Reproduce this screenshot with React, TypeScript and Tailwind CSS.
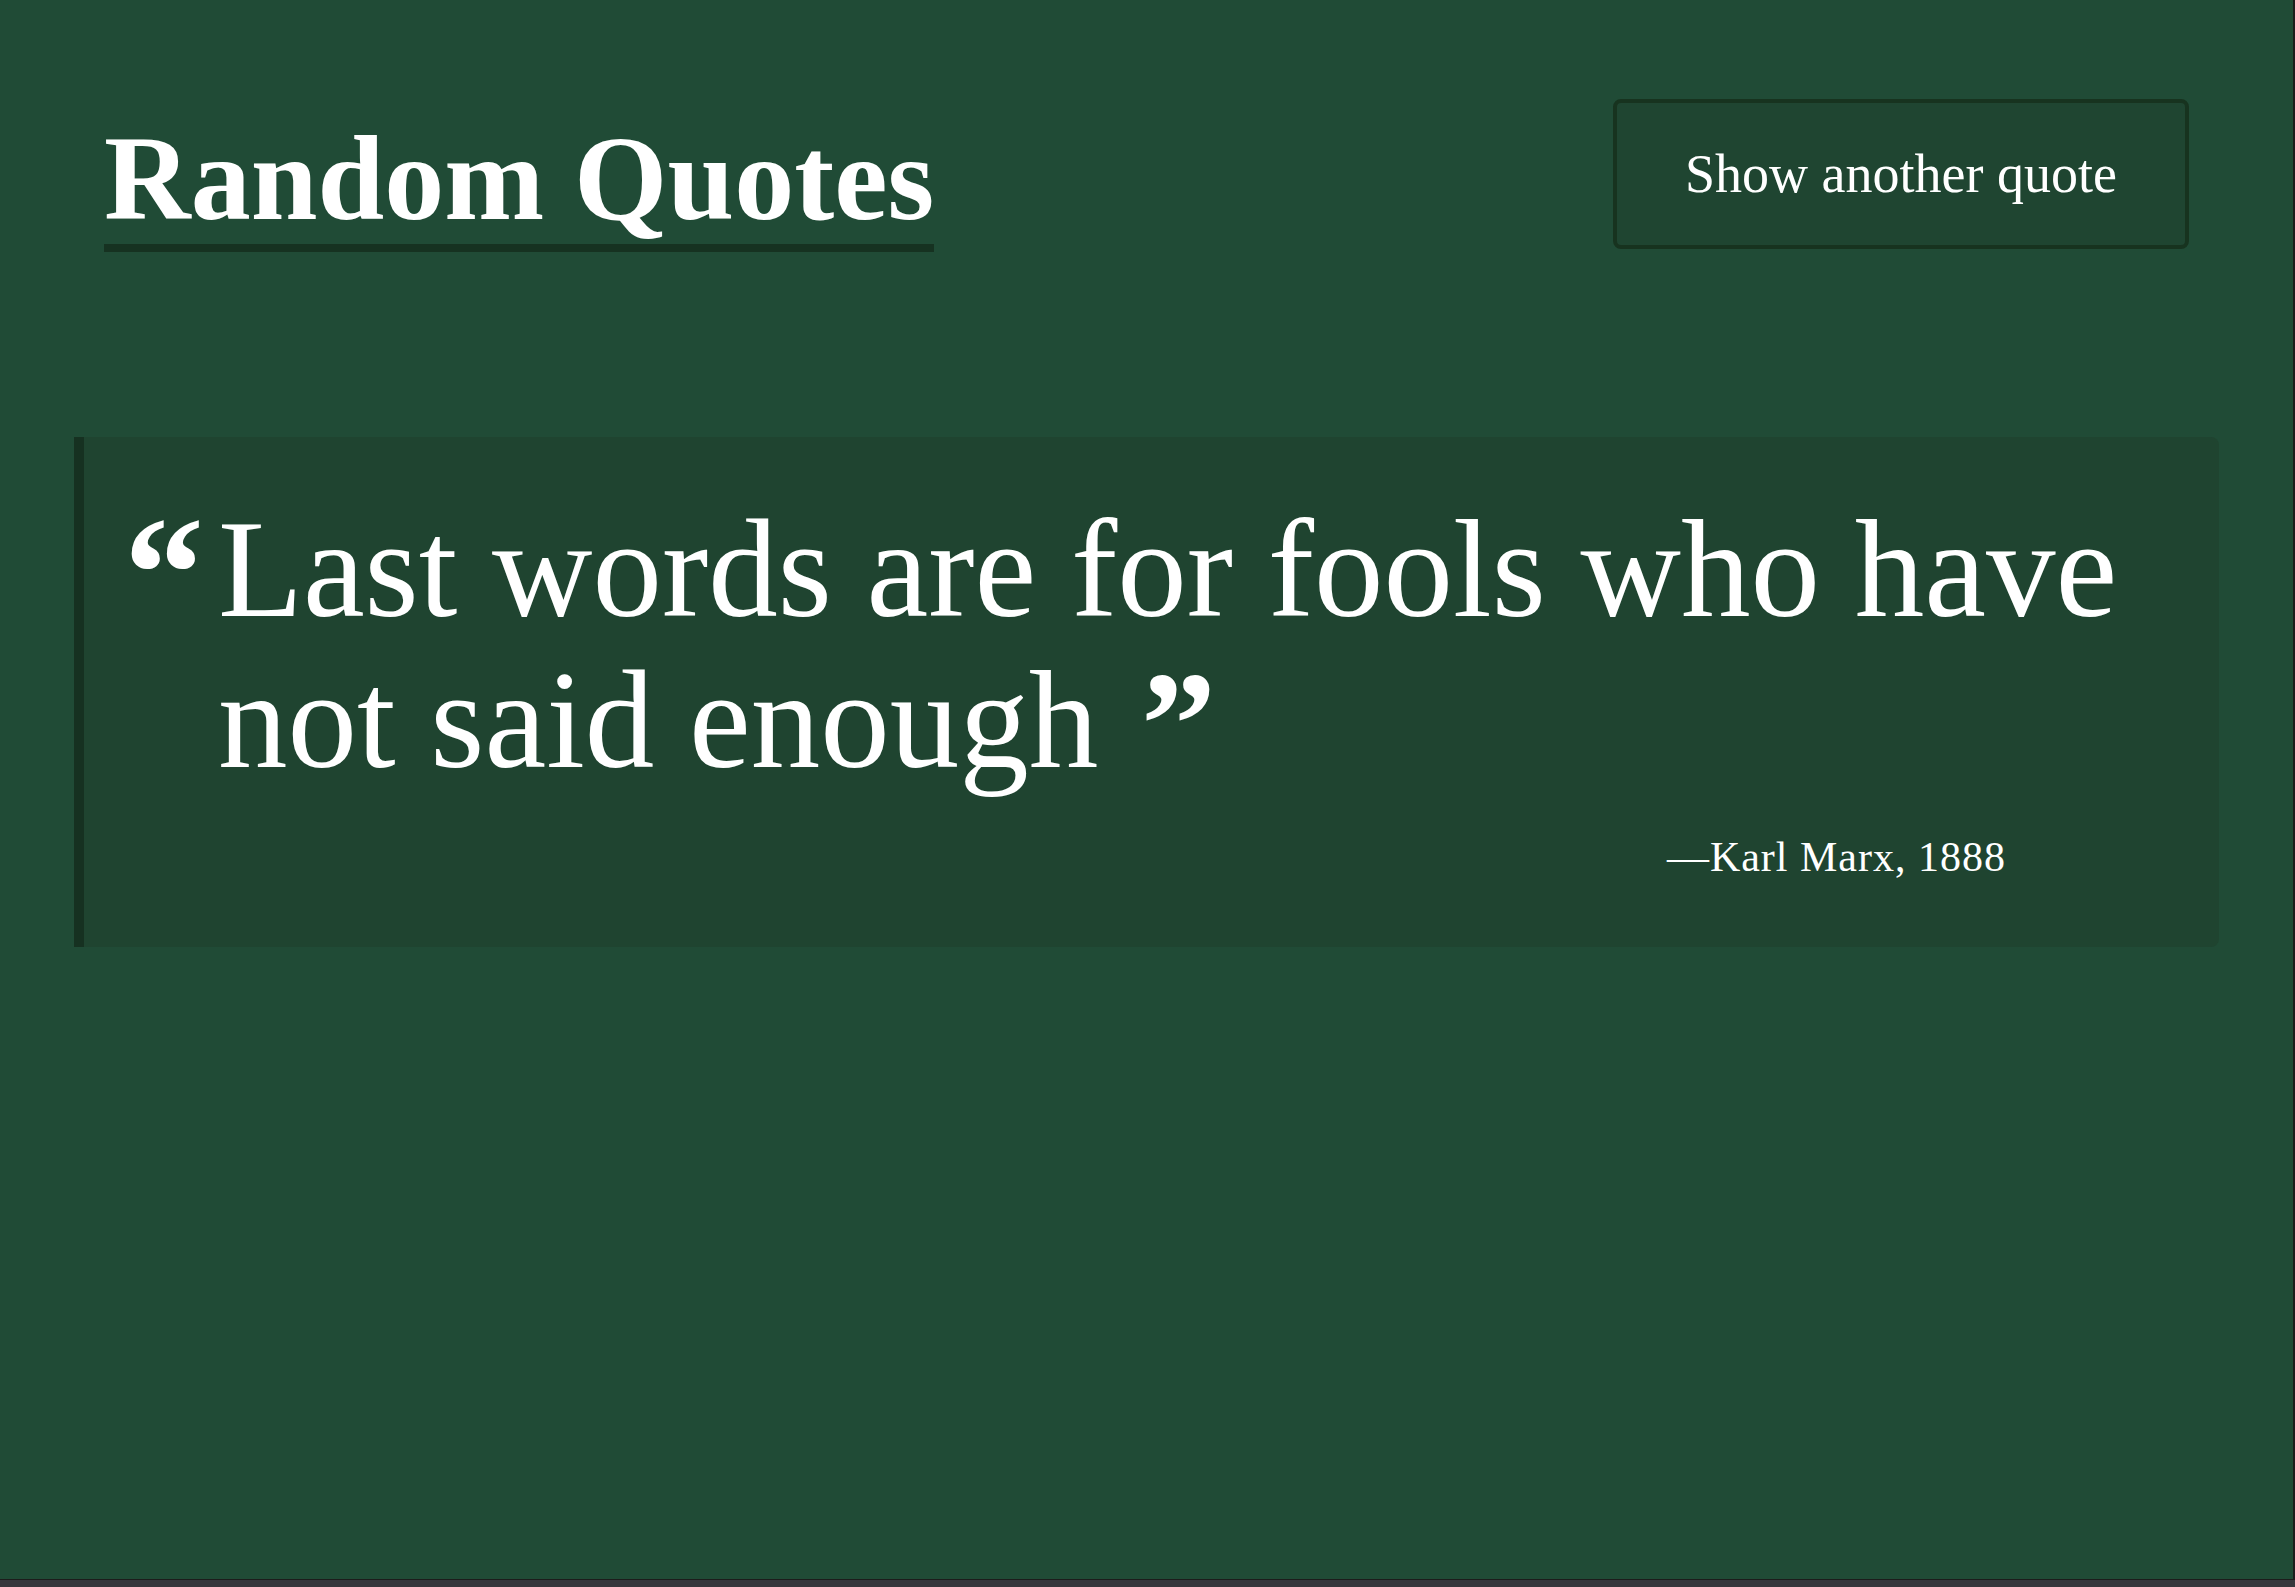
export default function App() {
  return (
    <div className="w-[2295px] h-[1587px] bg-[#37373c] flex flex-col overflow-hidden">
      <div className="flex h-[1579px] shrink-0">
        <main className="flex-1 bg-[#204b36] px-[74px] pt-[99px] text-white font-['Liberation_Serif','Times_New_Roman',serif]">
          <header className="flex justify-between items-start px-[30px]">
            <h1 className="mt-[20px] text-[120px] leading-[120px] font-bold border-b-[8px] border-[#163221] pb-[5px]">
              Random Quotes
            </h1>
            <button className="w-[576px] h-[150px] border-4 border-[#17331f] rounded-[8px] bg-[#1f4531] text-[54px] leading-none text-white flex items-center justify-center">
              Show another quote
            </button>
          </header>
          <section className="mt-[185px] border-l-[10px] border-[#163121] bg-[#1f4430] rounded-r-[8px] pt-[57px] pb-[65px] pl-[40px] pr-[50px] flex">
            <div className="w-[94px] shrink-0 text-[160px] leading-none font-bold">“</div>
            <div className="flex-1 flex flex-col">
              <p className="text-[139px] leading-[151px]">
                Last words are for fools who have not said enough{" "}
                <span className="inline-block align-top pt-[9px] ml-[8px] font-bold text-[150px] leading-[140px]">”</span>
              </p>
              <div className="mt-[36px] mr-[163px] text-right text-[42px] leading-[50px] tracking-[1px]">
                —Karl Marx, 1888
              </div>
            </div>
          </section>
        </main>
        <div className="w-[2px] bg-[#1c1c1c]" />
      </div>
      <div className="h-[1px] bg-[#1c1c1c] shrink-0" />
      <div className="flex-1 bg-[#37373c]" />
    </div>
  );
}
